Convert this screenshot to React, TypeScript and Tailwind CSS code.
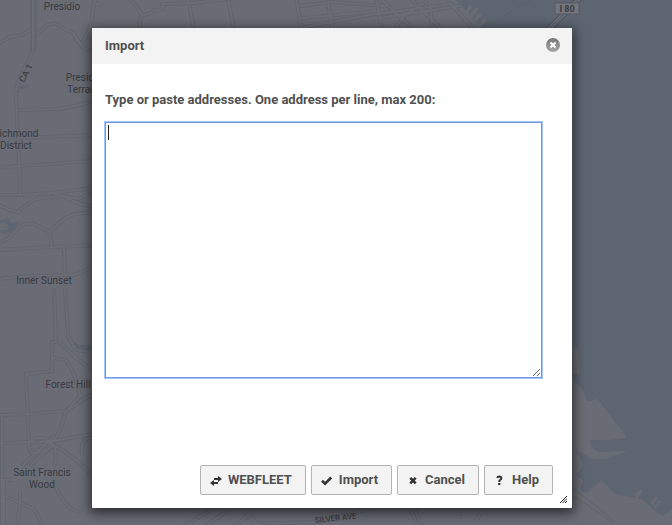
import type { ReactNode } from "react";

const ROADS = [
  // Northern streets and the park presidio corridor
  "M33 -4V48C33 62 16 70 16 98L20 180",
  "M-4 45L10 37L22 35L30 30L37 34L46 26Q54 21 60 26Q68 32 73 32Q80 50 94 52",
  "M72 32Q77 38 82 46M81 46Q88 34 92 20Q92 8 96 -2",
  "M94 -2Q96 8 102 3M112 -3Q128 -10 142 15Q150 15 154 10Q166 12 162 4Q178 4 192 3L290 -8",
  "M142 15Q136 26 144 32M188 -2L194 30M228 -2L234 30M296 -2L302 30",
  "M17 110L60 109L96 101M18 138L94 135M-4 168L20 166L94 161",
  "M300 6L332 2L386 6M328 2L332 28M302 18L370 12M300 28L375 14L452 4",
  "M376 -2L382 30M382 0L412 28M394 30L404 16L428 0M410 -2L440 28M430 4L432 28M380 18L460 6M446 -2L474 30",
  // Sunset and the park
  "M20 166V196M-4 195L20 195L52 193L94 188M-4 204Q8 210 18 212Q26 204 36 199L62 196Q78 204 94 207",
  "M54 194L78 199L94 192M0 242Q10 240 18 228Q24 222 34 224L50 232Q60 220 74 214L94 212M50 232L52 247",
  "M-4 250L94 245M64 248L65 273M-4 279L30 276L74 275L94 267M65 288L68 336L76 350M54 288L56 342H52V371L26 374L29 447",
  // Forest Hill and Saint Francis
  "M52 344V370M76 350L90 352M60 342Q78 362 94 370M53 358L66 360Q76 374 80 396L66 411L62 424Q58 438 48 446",
  "M-4 415L29 414L66 411L94 393M-4 443L29 442L52 441L94 434M2 415L2 525",
  "M29 442Q42 432 53 445L30 466M22 466L54 436M29 444Q28 460 50 448",
  "M54 445Q80 460 94 478M54 446Q58 456 54 466M56 488L62 498Q70 512 82 512M94 438Q80 436 82 455",
  "M2 480H12M4 480V525M20 490V503L17 530M2 495L18 502L34 509L46 530",
  // South of the dialog
  "M180 528L218 506M203 528L234 506M232 528L260 506M244 510L254 524L320 522L376 507M246 508L260 528",
  "M406 500L420 530M410 500L424 530M470 530L485 506",
];

function MapLabel({ x, y, children }: { x: number; y: number; children: ReactNode }) {
  return (
    <text x={x} y={y} textAnchor="middle" className="fill-[#383b42] text-[10px]">
      {children}
    </text>
  );
}

function CityMap() {
  return (
    <svg
      className="absolute inset-0 h-full w-full"
      viewBox="0 0 672 525"
      preserveAspectRatio="xMidYMid slice"
      aria-label="Map of San Francisco"
      role="img"
    >
      <rect width="672" height="525" fill="#696c74" />
      <g fill="#5c6570">
        <path d="M454 -2L484 30H574V382Q582 386 584 394L588 402Q594 400 597 398L627 438L604 440H590Q592 450 600 452L628 451L606 459H592L582 453L574 450Q584 460 582 467L576 475L583 480L580 490Q584 494 588 492L601 480L616 495L631 497L642 499L652 509L663 516L672 510V-2Z" />
        <path d="M20 86L31 85L24 89H18ZM0 220L8 219L12 223L20 221L14 230Q8 236 0 233V230Q12 230 8 225Q4 221 0 224ZM69 337Q78 348 92 347V350H74ZM76 345H90V349H80Z" />
      </g>
      <g fill="#696c74">
        <path d="M570 348H578L579 374H570ZM574 442L582 446L578 452L570 448ZM574 478L580 480L582 492H572Z" />
        <path d="M570 387Q581 384 584 392L586 401Q590 403 596 398L627 437L612 440H590L594 450L612 452L628 451Q614 454 608 459H593Q584 451 574 450L570 440Z" />
        <path d="M463 14L470 4L473 6L465 17ZM467 18L476 7L479 9L470 20ZM471 22L479 13L482 15L474 24ZM476 27L484 18L487 20L479 29Z" />
        <path d="M634 494L641 489L643 491L637 499ZM650 503L656 496L658 498L653 505ZM654 507L660 500L661 502L656 509ZM658 521Q666 516 674 519V526H660Z" />
      </g>
      <path d="M590 441L627 439L628 450L600 452Q592 450 590 441Z" fill="#5c6570" />
      <g fill="none" strokeLinejoin="round">
        {ROADS.map((d) => (
          <path key={d} d={d} stroke="#61656c" strokeWidth="4" />
        ))}
        {ROADS.map((d) => (
          <path key={d} d={d} stroke="#6a6d75" strokeWidth="2" />
        ))}
        <path d="M31 -2V52M36 -2V52" stroke="#5f6269" />
        <path d="M573 488L612 519Q615 521 612 522L574 496" stroke="#5f636a" />
        <path d="M548 30L584 -6" stroke="#4e555f" strokeWidth="6" />
        <path d="M548 30L584 -6" stroke="#6b7079" strokeWidth="4" />
        <path d="M548 30L584 -6" stroke="#525963" strokeWidth="1" />
        <path d="M484 28L538 -4M462 502L461 525" stroke="#515963" strokeDasharray="1 3" />
      </g>
      <rect x="555" y="3" width="24" height="11" fill="#73767c" stroke="#555b64" />
      <g fontFamily="Roboto, 'Liberation Sans', sans-serif">
        <MapLabel x={62} y={10}>Presidio</MapLabel>
        <MapLabel x={84} y={81}>Presidio</MapLabel>
        <MapLabel x={84} y={93}>Terrace</MapLabel>
        <MapLabel x={19} y={137}>ichmond</MapLabel>
        <MapLabel x={16} y={149}>District</MapLabel>
        <MapLabel x={44} y={284}>Inner Sunset</MapLabel>
        <MapLabel x={68} y={388}>Forest Hill</MapLabel>
        <MapLabel x={42} y={476}>Saint Francis</MapLabel>
        <MapLabel x={42} y={488}>Wood</MapLabel>
        <text x="567" y="12" textAnchor="middle" className="fill-[#3c3f46] text-[9px] font-bold">I 80</text>
        <text x="24" y="83" transform="rotate(-62 24 83)" className="fill-[#3c3f46] text-[9px] font-medium">CA 1</text>
        <text x="315" y="523" transform="rotate(-6 315 523)" className="fill-[#3c3f46] text-[8px] font-medium">SILVER AVE</text>
      </g>
    </svg>
  );
}

function ActionButton({ icon, children }: { icon: ReactNode; children: ReactNode }) {
  return (
    <button
      type="button"
      className="flex h-[30px] items-center gap-1.5 rounded-xs border border-[#b3b3b3] bg-[#f3f3f3] pr-[13px] pl-[9px] hover:bg-[#eaeaea]"
    >
      <svg className="h-3 w-3 shrink-0" viewBox="0 0 12 12" fill="none" aria-hidden="true">
        {icon}
      </svg>
      {children}
    </button>
  );
}

export default function App() {
  return (
    <main className="relative min-h-screen overflow-hidden bg-[#696c74] pt-7 pr-[100px] pb-4 pl-[92px] font-['Roboto','Liberation_Sans',sans-serif] text-[13px] leading-4 font-normal text-[#505050]">
      <CityMap />
      <section
        role="dialog"
        aria-labelledby="import-title"
        className="relative w-full rounded-[1px] bg-white font-bold shadow-[0_3px_12px_2px_rgba(0,0,0,0.6)]"
      >
        <header className="flex h-9 items-center justify-between bg-[#f3f3f3] pr-3 pl-[13px]">
          <h1 id="import-title">Import</h1>
          <button type="button" aria-label="Close" className="mb-0.5">
            <svg width="14" height="14" viewBox="0 0 14 14" aria-hidden="true">
              <defs>
                <linearGradient id="close-fill" x1="0" y1="0" x2="0" y2="1">
                  <stop offset="0" stopColor="#777" />
                  <stop offset="1" stopColor="#a8a8a8" />
                </linearGradient>
              </defs>
              <circle cx="7" cy="7" r="7" fill="url(#close-fill)" />
              <path d="M4.5 4.5L9.5 9.5M9.5 4.5L4.5 9.5" stroke="#fff" strokeWidth="2.2" />
            </svg>
          </button>
        </header>
        <div className="pt-7 pr-[30px] pb-[87px] pl-[13px]">
          <label htmlFor="addresses" className="block">
            Type or paste addresses. One address per line, max 200:
          </label>
          <div className="relative mt-3.5">
            <textarea
              id="addresses"
              className="block h-64 w-full resize border border-[#6f97e2] bg-white p-0.5 font-normal caret-transparent ring-1 ring-[#a3c5fb] outline-none"
            />
            <span aria-hidden="true" className="absolute top-[3px] left-[3px] h-[15px] w-px bg-[#222]" />
          </div>
        </div>
        <footer className="flex justify-end gap-[5px] pr-[19px] pb-[13px]">
          <ActionButton
            icon={
              <g fill="#333">
                <path d="M4 4H8V2L12 5L8 8V6H4Z" />
                <path d="M8 8H4V6L0 9L4 12V10H8Z" />
              </g>
            }
          >
            WEBFLEET
          </ActionButton>
          <ActionButton icon={<path d="M1 6.7L4.1 9.7L10.2 3.5" stroke="#333" strokeWidth="2.6" />}>Import</ActionButton>
          <ActionButton icon={<path d="M3.3 3.8L8.7 9.4M8.7 3.8L3.3 9.4" stroke="#333" strokeWidth="2.6" />}>
            Cancel
          </ActionButton>
          <ActionButton
            icon={
              <g stroke="#333" strokeWidth="2">
                <path d="M3.3 4Q3.5 2.5 5.3 2.5Q7.3 2.5 7.3 4.2Q7.3 5.2 6.2 5.8Q5.2 6.3 5.2 7.9" />
                <path d="M4.2 10H6.4" />
              </g>
            }
          >
            Help
          </ActionButton>
        </footer>
        <svg
          className="absolute right-[5px] bottom-[5px] h-[7px] w-[7px] cursor-se-resize"
          viewBox="0 0 7 7"
          aria-hidden="true"
        >
          <path d="M0 7L7 0M2.5 7L7 2.5M5 7L7 5" stroke="#222" strokeWidth="1" />
        </svg>
      </section>
    </main>
  );
}
